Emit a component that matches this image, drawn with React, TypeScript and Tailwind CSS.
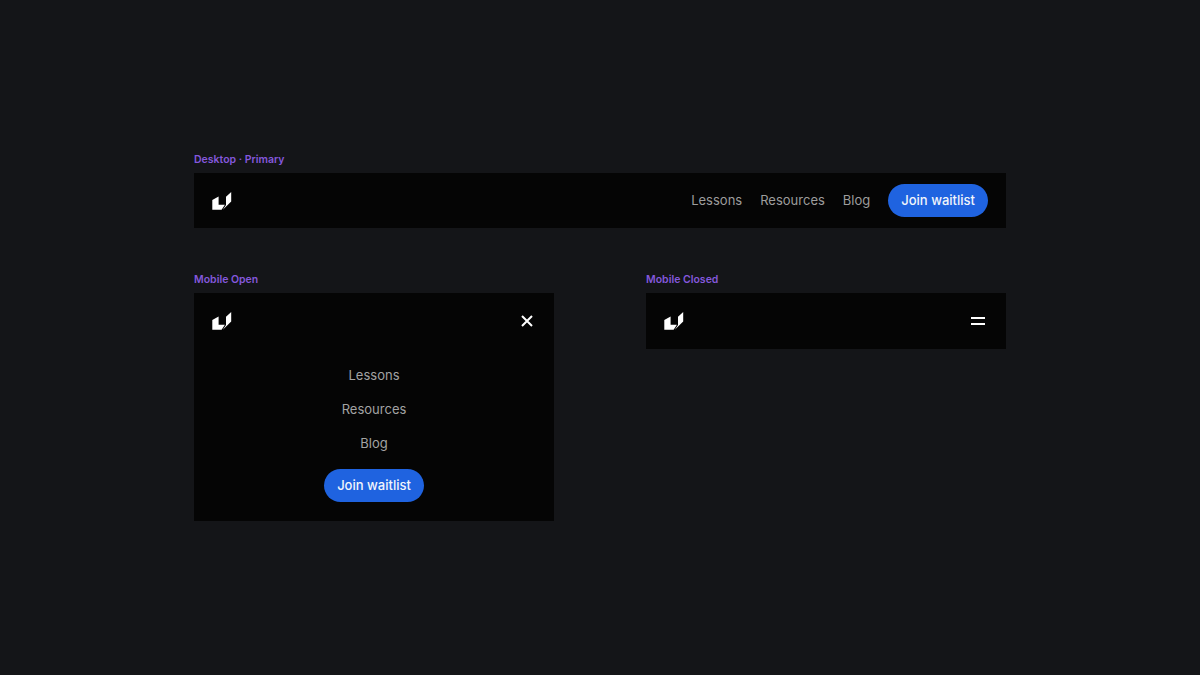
const font = { fontFamily: "Inter, 'Liberation Sans', sans-serif" };

function Logo() {
	return (
		<svg width="20" height="18" viewBox="0 0 20 18" fill="white" className="block">
			<path d="M0.3 8 L6.6 4.4 V12.8 H12.9 L9.6 17.8 H0.3 Z" />
			<path d="M14 4.8 L19.2 0 V9.6 L10.8 17.8 L14 13 Z" />
		</svg>
	);
}

function CloseIcon() {
	return (
		<svg width="12" height="12" viewBox="0 0 12 12" stroke="white" strokeWidth="2" fill="none" className="block">
			<path d="M1 1 L11 11 M11 1 L1 11" />
		</svg>
	);
}

function MenuIcon() {
	return (
		<svg width="14" height="8" viewBox="0 0 14 8" fill="white" className="block">
			<rect x="0" y="0" width="14" height="2" />
			<rect x="0" y="6" width="14" height="2" />
		</svg>
	);
}

function JoinButton() {
	return (
		<button
			type="button"
			className="h-[33px] rounded-full bg-[#1f63e0] px-[13px] text-[13px] font-medium text-[#f2f5fb]"
		>
			Join waitlist
		</button>
	);
}

function Label({ children }: { children: string }) {
	return <div className="mb-[6px] h-[14px] text-[10.5px] leading-[14px] font-semibold text-[#8458dc]">{children}</div>;
}

const links = ["Lessons", "Resources", "Blog"];

export default function App() {
	return (
		<div style={font} className="flex min-h-screen items-center justify-center bg-[#141518]">
			<div className="flex w-[812px] flex-col gap-[45px] pb-px">
				{/* Desktop */}
				<div>
					<Label>Desktop · Primary</Label>
					<nav className="flex h-[55px] items-center justify-between bg-[#050505] px-[18px]">
						<Logo />
						<div className="flex items-center gap-[18px]">
							{links.map((link) => (
								<a key={link} className="text-[13px] text-[#9d9d9d]">
									{link}
								</a>
							))}
							<JoinButton />
						</div>
					</nav>
				</div>

				<div className="flex items-start justify-between">
					{/* Mobile open */}
					<div className="w-[360px]">
						<Label>Mobile Open</Label>
						<div className="h-[228px] bg-[#050505]">
							<div className="flex h-[56px] items-center justify-between pr-[21px] pl-[18px]">
								<Logo />
								<CloseIcon />
							</div>
							<div className="flex flex-col items-center pt-[16px]">
								{links.map((link) => (
									<a key={link} className="mb-[14px] h-[20px] text-[13px] leading-[20px] text-[#a3a3a3]">
										{link}
									</a>
								))}
								<div className="mt-[2px]">
									<JoinButton />
								</div>
							</div>
						</div>
					</div>

					{/* Mobile closed */}
					<div className="w-[360px]">
						<Label>Mobile Closed</Label>
						<div className="flex h-[56px] items-center justify-between bg-[#050505] pr-[21px] pl-[18px]">
							<Logo />
							<MenuIcon />
						</div>
					</div>
				</div>
			</div>
		</div>
	);
}
